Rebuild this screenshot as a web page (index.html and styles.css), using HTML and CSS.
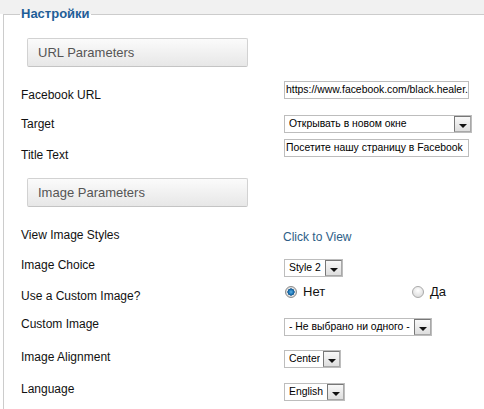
FILE: index.html
```html
<!DOCTYPE html>
<html>
<head>
<meta charset="utf-8">
<link rel="stylesheet" href="styles.css">
</head>
<body>
<fieldset class="settings">
  <legend>Настройки</legend>
  <div class="section">URL Parameters</div>

  <div class="row r1">
    <label class="lbl">Facebook URL</label>
    <div class="ctl"><div class="input w185">https://www.facebook.com/black.healer.</div></div>
  </div>
  <div class="row r2">
    <label class="lbl">Target</label>
    <div class="ctl"><div class="select w188"><span class="val">Открывать в новом окне</span><span class="arrow"></span></div></div>
  </div>
  <div class="row r3">
    <label class="lbl">Title Text</label>
    <div class="ctl"><div class="input w185">Посетите нашу страницу в Facebook</div></div>
  </div>

  <div class="section">Image Parameters</div>

  <div class="row r4">
    <label class="lbl">View Image Styles</label>
    <div class="ctl"><a class="link">Click to View</a></div>
  </div>
  <div class="row r5">
    <label class="lbl">Image Choice</label>
    <div class="ctl"><div class="select w59"><span class="val">Style 2</span><span class="arrow"></span></div></div>
  </div>
  <div class="row r6">
    <label class="lbl">Use a Custom Image?</label>
    <div class="ctl radios">
      <span class="opt"><span class="radio checked"></span>Нет</span>
      <span class="opt"><span class="radio"></span>Да</span>
    </div>
  </div>
  <div class="row r7">
    <label class="lbl">Custom Image</label>
    <div class="ctl"><div class="select w148"><span class="val">- Не выбрано ни одного -</span><span class="arrow"></span></div></div>
  </div>
  <div class="row r8">
    <label class="lbl">Image Alignment</label>
    <div class="ctl"><div class="select w57"><span class="val">Center</span><span class="arrow"></span></div></div>
  </div>
  <div class="row r9">
    <label class="lbl">Language</label>
    <div class="ctl"><div class="select w61"><span class="val">English</span><span class="arrow"></span></div></div>
  </div>
</fieldset>
</body>
</html>
```

FILE: styles.css
```css
html, body {
  margin: 0;
  padding: 0;
}
body {
  width: 484px;
  height: 409px;
  overflow: hidden;
  font-family: "Liberation Sans", Arial, sans-serif;
  color: #111111;
  background: linear-gradient(#f1f1f1 0, #f1f1f1 14px, #ffffff 14px);
}
.settings {
  margin: 6px 0 0 3px;
  padding: 0 0 0 17px;
  border: 1px solid #cccccc;
  border-right: 0;
  border-bottom: 0;
  min-width: 0;
}
.settings legend {
  font-size: 13px;
  line-height: 16px;
  font-weight: bold;
  color: #1f5e98;
  padding: 0 1px;
  margin-left: -1px;
}
.section {
  margin: 16px 0 0 6px;
  width: 209px;
  height: 27px;
  line-height: 27px;
  padding-left: 10px;
  box-sizing: content-box;
  border: 1px solid #d2d2d2;
  border-bottom-color: #c4c4c4;
  border-radius: 2px;
  background: linear-gradient(#fbfbfb, #e7e7e7);
  font-size: 13px;
  color: #555555;
}
.row {
  display: grid;
  grid-template-columns: 263px 1fr;
  align-items: start;
}
.lbl {
  display: block;
  font-size: 12px;
  line-height: 14px;
  color: #111111;
}
.ctl {
  font-size: 11px;
  line-height: 14px;
}
.r1 { margin-top: 14px; height: 34px; }
.r1 .lbl { padding-top: 7px; }
.r2 { height: 24px; }
.r2 .lbl { padding-top: 2px; }
.r3 { height: 38px; }
.r3 .lbl { padding-top: 9px; }
.r3 + .section { margin-top: 1px; }
.r4 { margin-top: 21px; height: 30px; }
.r4 .ctl { padding-top: 2px; }
.r5 { height: 31px; }
.r5 .ctl { padding-top: 1px; }
.r6 { height: 28px; }
.r7 { height: 32px; }
.r7 .ctl { padding-top: 1px; }
.r8 { height: 32px; }
.r8 .lbl { padding-top: 1px; }
.r8 .ctl { padding-top: 1px; }
.r9 { height: 30px; }
.r9 .lbl { padding-top: 1px; }
.r9 .ctl { padding-top: 2px; }

.input {
  box-sizing: border-box;
  height: 18px;
  border: 1px solid #bdbdbd;
  background: #fff;
  padding: 0 0 0 1px;
  font-size: 10.4px;
  line-height: 16px;
  color: #000;
  white-space: nowrap;
  overflow: hidden;
}
.select {
  box-sizing: border-box;
  height: 18px;
  border: 1px solid #bdbdbd;
  background: #fff;
  display: flex;
  align-items: center;
  justify-content: space-between;
  padding: 0 0 0 4px;
  font-size: 10.4px;
  color: #000;
  white-space: nowrap;
}
.select .val {
  overflow: hidden;
}
.select .arrow {
  flex: none;
  box-sizing: border-box;
  width: 17px;
  height: 16px;
  margin-left: 2px;
  border: 1px solid #777777;
  border-right-color: #a8a8a8;
  border-bottom-color: #a8a8a8;
  background: linear-gradient(#f8f8f8, #dedede);
  position: relative;
}
.select .arrow::after {
  content: "";
  position: absolute;
  left: 4px;
  bottom: 3px;
  border-left: 4px solid transparent;
  border-right: 4px solid transparent;
  border-top: 4px solid #111;
}
.w185 { width: 185px; }
.w188 { width: 188px; }
.w59 { width: 59px; }
.w148 { width: 148px; }
.w57 { width: 57px; }
.w61 { width: 61px; }

.link {
  font-size: 12px;
  color: #2d5e87;
  margin-left: -1px;
}
.radios {
  display: flex;
  font-size: 13px;
  line-height: 14px;
  margin-top: -4px;
}
.opt {
  display: flex;
  align-items: center;
  color: #111;
}
.opt:first-child {
  width: 127px;
  padding-left: 1px;
}
.radio {
  box-sizing: border-box;
  width: 12px;
  height: 12px;
  border-radius: 50%;
  border: 1px solid #a9a9a9;
  background: radial-gradient(circle at 50% 35%, #ffffff, #d4d4d4);
  margin-right: 6px;
}
.radio.checked {
  border-color: #8c8c8c;
  background: radial-gradient(circle at 50% 50%, #5eb3e8 0, #1a6fae 2.5px, #0d4f88 3.5px, #e9e9e9 3.6px, #c9c9c9 6px);
}
```
